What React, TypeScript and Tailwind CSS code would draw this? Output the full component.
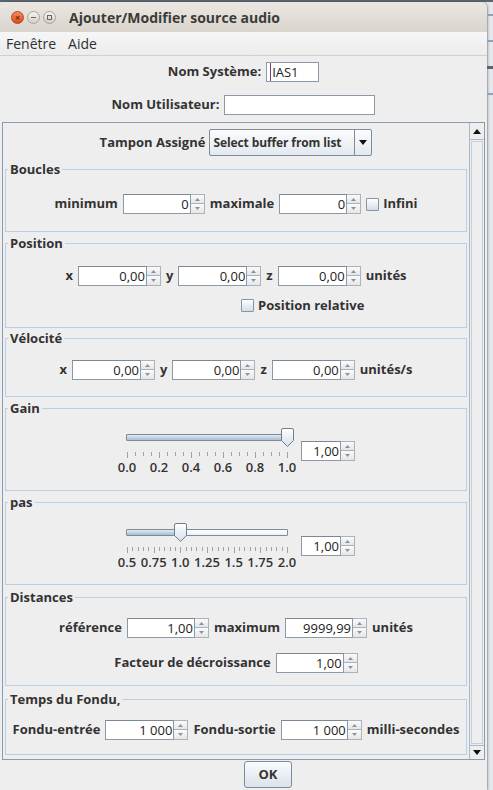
import React from 'react';

const ticks = (n: number, every: number) =>
  Array.from({ length: n }, (_, i) => i % every === 0);

function Arrow({ down }: { down?: boolean }) {
  return (
    <svg width="5" height="3" viewBox="0 0 5 3">
      <path d={down ? 'M0 0 H5 L2.5 3 Z' : 'M0 3 H5 L2.5 0 Z'} fill="#8a939c" />
    </svg>
  );
}

function Spin({ value, field }: { value: string; field: string }) {
  return (
    <div className="flex h-[20px]">
      <div
        className={`${field} h-[20px] border border-[#8c99a6] border-t-[#7a8794] bg-white pr-[1px] text-right text-[13px] font-normal leading-[18px] text-[#222]`}
      >
        {value}
      </div>
      <div className="flex w-[14px] flex-col">
        <div className="flex h-[10px] items-center justify-center border border-l-0 border-[#a9b3bd] bg-gradient-to-b from-[#fafafa] to-[#e6e6e6]">
          <Arrow />
        </div>
        <div className="flex h-[10px] items-center justify-center border border-l-0 border-t-0 border-[#a9b3bd] bg-gradient-to-b from-[#fafafa] to-[#e6e6e6]">
          <Arrow down />
        </div>
      </div>
    </div>
  );
}

function Check({ label }: { label: string }) {
  return (
    <div className="flex items-center gap-[4px]">
      <div className="h-[13px] w-[13px] rounded-[1px] border border-[#8595a6] bg-gradient-to-b from-[#ffffff] to-[#d3dde8]" />
      <span>{label}</span>
    </div>
  );
}

function Panel({
  title,
  className,
  children,
}: {
  title: string;
  className: string;
  children: React.ReactNode;
}) {
  return (
    <fieldset className={`border border-[#b8cfe5] ${className}`}>
      <legend className="ml-[2px] px-[2px] text-[13px] font-bold leading-[14px]">{title}</legend>
      {children}
    </fieldset>
  );
}

function Thumb() {
  return (
    <svg width="13" height="19" viewBox="0 0 13 19">
      <defs>
        <linearGradient id="tg" x1="0" y1="0" x2="0" y2="1">
          <stop offset="0" stopColor="#ffffff" />
          <stop offset="1" stopColor="#d6e0ea" />
        </linearGradient>
      </defs>
      <path
        d="M2 0.5 H11 A1.5 1.5 0 0 1 12.5 2 V12.5 L6.5 18.5 L0.5 12.5 V2 A1.5 1.5 0 0 1 2 0.5 Z"
        fill="url(#tg)"
        stroke="#6f7e8e"
      />
    </svg>
  );
}

function Slider({
  labels,
  tickCount,
  major,
  fill,
  thumb,
}: {
  labels: string[];
  tickCount: number;
  major: number;
  fill: string;
  thumb: string;
}) {
  return (
    <div className="relative h-[46px] w-[180px]">
      <div className="ml-[9px] mt-[6px] flex h-[7px] w-[162px] overflow-hidden rounded-[1px] border border-[#7d8b9a] bg-gradient-to-b from-[#ffffff] to-[#eef1f4]">
        <div className={`${fill} h-full bg-gradient-to-b from-[#e2eaf3] to-[#a9bdd3]`} />
      </div>
      <div className={`absolute top-0 ${thumb}`}>
        <Thumb />
      </div>
      <div className="ml-[10px] mt-[11px] flex w-[161px] items-start justify-between">
        {ticks(tickCount, major).map((m, i) => (
          <div key={i} className={`w-px bg-[#9aa4ae] ${m ? 'h-[6px]' : 'h-[4px]'}`} />
        ))}
      </div>
      <div className="mt-[2px] flex w-[180px] justify-between text-[13px] font-semibold leading-[14px]">
        {labels.map((l) => (
          <div key={l} className="flex w-[20px] justify-center whitespace-nowrap">
            {l}
          </div>
        ))}
      </div>
    </div>
  );
}

export default function App() {
  return (
    <div className="flex h-[790px] w-[493px] flex-col overflow-hidden bg-[#e4e7eb] font-['Open_Sans',sans-serif] text-[13px] font-bold text-[#333333]">
      <div className="h-[2px] w-full bg-[#5b6470]" />
      <div className="flex flex-1">
        <div className="flex h-[788px] w-[487px] flex-col rounded-t-[6px] bg-[#eeeeee] shadow-[1px_0_2px_rgba(0,0,0,0.35)]">
          {/* title bar */}
          <div className="flex h-[30px] items-center rounded-t-[6px] bg-gradient-to-b from-[#ebe8e3] to-[#d9d4cc] pl-[11px]">
            <div className="flex items-center gap-[3px]">
              <div className="flex h-[13px] w-[13px] items-center justify-center rounded-full border border-[#b8451c] bg-gradient-to-b from-[#f48a5c] to-[#dc4a17] text-[9px] leading-none text-[#7a2a0c]">
                ×
              </div>
              <div className="flex h-[13px] w-[13px] items-center justify-center rounded-full border border-[#a9a49b] bg-gradient-to-b from-[#f4f2ee] to-[#d3cfc7]">
                <div className="h-px w-[5px] bg-[#6d6a64]" />
              </div>
              <div className="flex h-[13px] w-[13px] items-center justify-center rounded-full border border-[#a9a49b] bg-gradient-to-b from-[#f4f2ee] to-[#d3cfc7]">
                <div className="h-[5px] w-[5px] border border-[#6d6a64]" />
              </div>
            </div>
            <span className="ml-[13px] text-[14px] font-bold text-[#3c3b37]">
              Ajouter/Modifier source audio
            </span>
          </div>
          {/* menu bar */}
          <div className="flex h-[24px] items-center gap-[12px] border-b border-[#d0d0d0] bg-gradient-to-b from-[#f6f6f6] to-[#ececec] pl-[6px] text-[14px] font-normal text-[#2f2f2f]">
            <span>Fenêtre</span>
            <span>Aide</span>
          </div>
          {/* name fields */}
          <div className="flex flex-col items-center pb-[7px] pt-[6px]">
            <div className="flex h-[20px] items-center gap-[5px]">
              <span>Nom Système:</span>
              <div className="h-[20px] w-[53px] border border-[#8c99a6] bg-white pl-[3px] text-[13px] font-normal leading-[18px] text-[#222]">
                <span className="border-l border-[#7a3c7a] pl-px">IAS1</span>
              </div>
            </div>
            <div className="mt-[13px] flex h-[20px] items-center gap-[5px]">
              <span>Nom Utilisateur:</span>
              <div className="h-[20px] w-[151px] border border-[#8c99a6] bg-white" />
            </div>
          </div>
          {/* scroll pane */}
          <div className="mx-[2px] flex h-[638px] border border-[#8c9cb0]">
            <div className="flex flex-1 flex-col overflow-hidden px-[2px] pt-[6px]">
              <div className="flex h-[27px] items-center justify-center gap-[4px]">
                <span>Tampon Assigné</span>
                <div className="flex h-[27px] w-[163px] items-center rounded-[2px] border border-[#7d8b9a] bg-gradient-to-b from-[#fbfcfd] to-[#e3e9ef]">
                  <span className="flex-1 whitespace-nowrap pl-[3px] text-[12px] tracking-[-0.1px]">
                    Select buffer from list
                  </span>
                  <div className="flex h-full w-[17px] items-center justify-center border-l border-[#7d8b9a]">
                    <svg width="8" height="5" viewBox="0 0 8 5">
                      <path d="M0 0 H8 L4 5 Z" fill="#111" />
                    </svg>
                  </div>
                </div>
              </div>

              <div className="mt-[6px] flex flex-col gap-[4px]">
                <Panel title="Boucles" className="pb-[17px] pt-[18px]">
                  <div className="flex h-[20px] items-center justify-center gap-[5px]">
                    <span>minimum</span>
                    <Spin value="0" field="w-[68px]" />
                    <span>maximale</span>
                    <Spin value="0" field="w-[68px]" />
                    <Check label="Infini" />
                  </div>
                </Panel>

                <Panel title="Position" className="pb-[14px] pt-[16px]">
                  <div className="flex h-[20px] items-center justify-center gap-[5px]">
                    <span>x</span>
                    <Spin value="0,00" field="w-[69px]" />
                    <span>y</span>
                    <Spin value="0,00" field="w-[69px]" />
                    <span>z</span>
                    <Spin value="0,00" field="w-[69px]" />
                    <span>unités</span>
                  </div>
                  <div className="mt-[12px] flex h-[15px] items-center pl-[235px]">
                    <Check label="Position relative" />
                  </div>
                </Panel>

                <Panel title="Vélocité" className="mt-[-1px] pb-[16px] pt-[15px]">
                  <div className="flex h-[20px] items-center justify-center gap-[5px]">
                    <span>x</span>
                    <Spin value="0,00" field="w-[69px]" />
                    <span>y</span>
                    <Spin value="0,00" field="w-[69px]" />
                    <span>z</span>
                    <Spin value="0,00" field="w-[69px]" />
                    <span>unités/s</span>
                  </div>
                </Panel>

                <Panel title="Gain" className="pb-[16px] pt-[13px]">
                  <div className="flex items-center justify-center gap-[4px]">
                    <Slider
                      labels={['0.0', '0.2', '0.4', '0.6', '0.8', '1.0']}
                      tickCount={21}
                      major={4}
                      fill="w-full"
                      thumb="left-[164px]"
                    />
                    <Spin value="1,00" field="w-[40px]" />
                  </div>
                </Panel>

                <Panel title="pas" className="pb-[15px] pt-[14px]">
                  <div className="flex items-center justify-center gap-[4px]">
                    <Slider
                      labels={['0.5', '0.75', '1.0', '1.25', '1.5', '1.75', '2.0']}
                      tickCount={31}
                      major={5}
                      fill="w-[55px]"
                      thumb="left-[57px]"
                    />
                    <Spin value="1,00" field="w-[40px]" />
                  </div>
                </Panel>

                <Panel title="Distances" className="mt-[1px] pb-[12px] pt-[14px]">
                  <div className="flex h-[20px] items-center justify-center gap-[5px]">
                    <span>référence</span>
                    <Spin value="1,00" field="w-[68px]" />
                    <span>maximum</span>
                    <Spin value="9999,99" field="w-[68px]" />
                    <span>unités</span>
                  </div>
                  <div className="mt-[15px] flex h-[20px] items-center justify-center gap-[5px]">
                    <span>Facteur de décroissance</span>
                    <Spin value="1,00" field="w-[68px]" />
                  </div>
                </Panel>

                <Panel title="Temps du Fondu," className="mt-[2px] pb-[14px] pt-[14px]">
                  <div className="flex h-[20px] items-center justify-center gap-[5px]">
                    <span>Fondu-entrée</span>
                    <Spin value="1 000" field="w-[69px]" />
                    <span>Fondu-sortie</span>
                    <Spin value="1 000" field="w-[67px]" />
                    <span>milli-secondes</span>
                  </div>
                </Panel>
              </div>
            </div>
            {/* scrollbar */}
            <div className="flex w-[15px] flex-col border-l border-[#a9b8c8] bg-[#eeeeee]">
              <div className="flex h-[17px] items-center justify-center border-b border-[#a9b8c8]">
                <svg width="8" height="5" viewBox="0 0 8 5">
                  <path d="M0 5 H8 L4 0 Z" fill="#111" />
                </svg>
              </div>
              <div className="mx-px my-px flex-1 border border-[#c3d1df]" />
              <div className="flex h-[14px] items-center justify-center border-t border-[#a9b8c8]">
                <svg width="8" height="5" viewBox="0 0 8 5">
                  <path d="M0 0 H8 L4 5 Z" fill="#111" />
                </svg>
              </div>
            </div>
          </div>
          {/* OK */}
          <div className="flex flex-1 items-start pl-[244px] pt-px">
            <div className="flex h-[27px] w-[48px] items-center justify-center rounded-[3px] border border-[#7d8b9a] bg-gradient-to-b from-[#fbfcfd] to-[#dbe2ea]">
              OK
            </div>
          </div>
        </div>
        <div className="flex flex-1 flex-col gap-[24px] pt-[12px]">
          <div className="h-[2px] bg-[#8fa3ba]" />
          <div className="h-[2px] bg-[#8fa3ba]" />
          <div className="h-[3px] bg-[#5b6470]" />
          <div className="h-[2px] bg-[#8fa3ba]" />
        </div>
      </div>
    </div>
  );
}
